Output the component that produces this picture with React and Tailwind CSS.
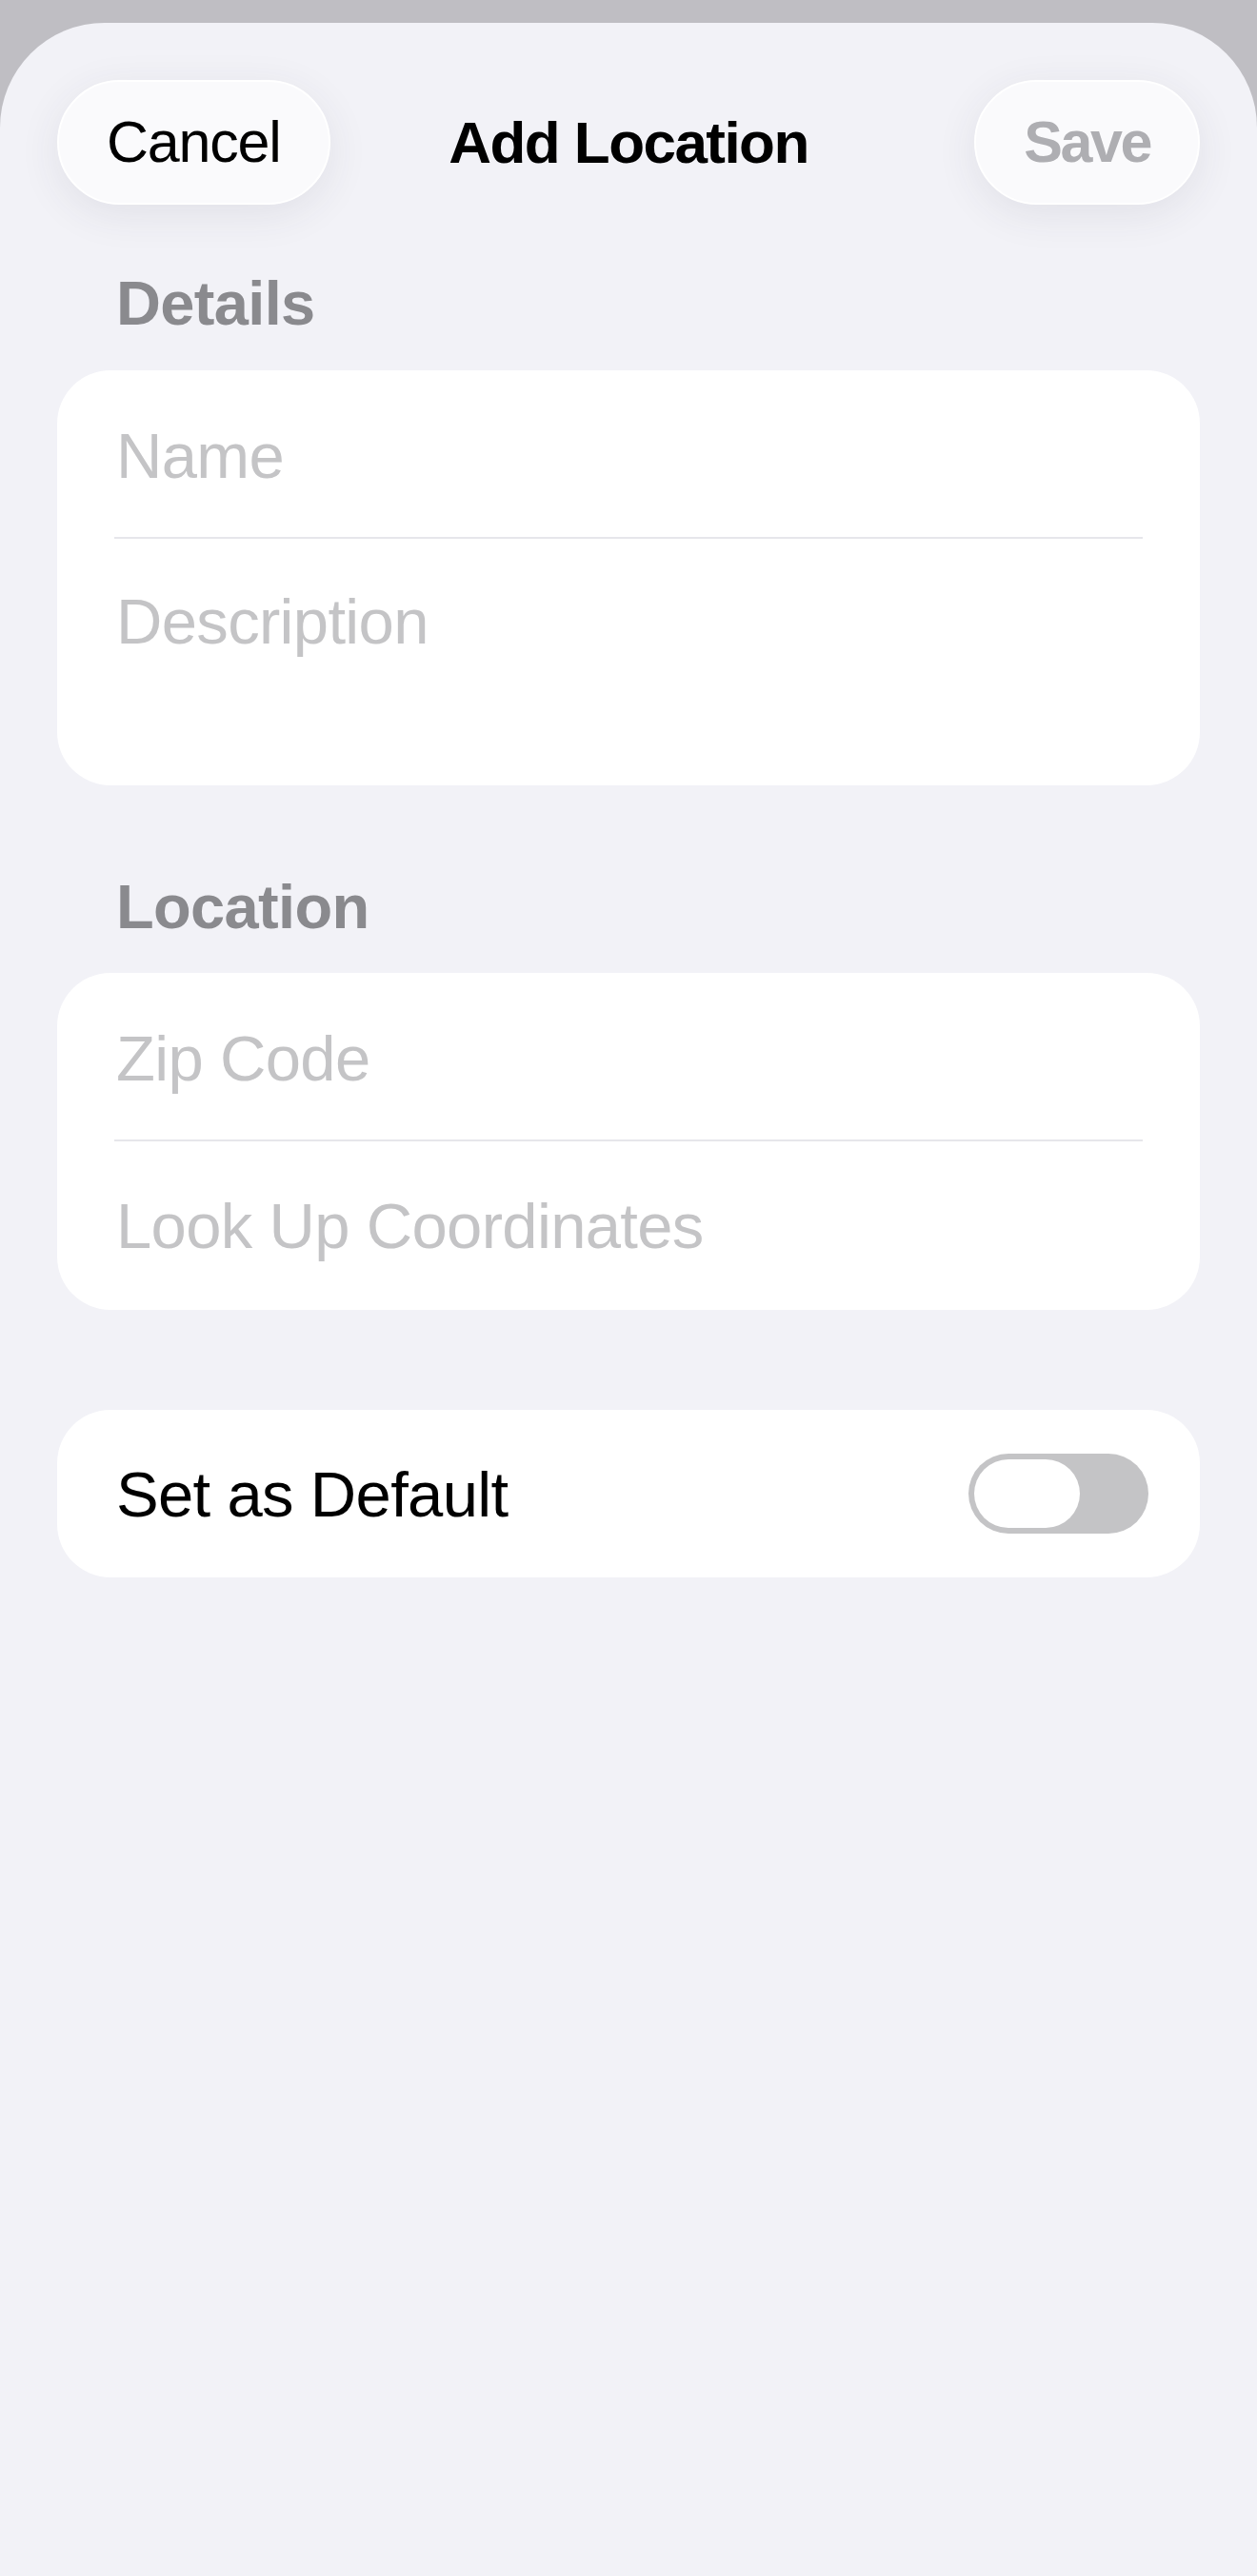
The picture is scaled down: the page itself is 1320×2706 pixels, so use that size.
import { useState } from 'react'

const font = { fontFamily: '"Liberation Sans", Arial, sans-serif' }

function PillButton({ children, className = '' }) {
  return (
    <button
      type="button"
      className={`h-[131px] px-[50px] rounded-full bg-[#fafafc] border-2 border-white shadow-[0_10px_44px_rgba(60,60,80,0.09)] text-[61px] leading-none ${className}`}
    >
      {children}
    </button>
  )
}

function SectionTitle({ children, className = '' }) {
  return (
    <h2 className={`pl-[62px] text-[65px] leading-[80px] font-bold text-[#8a8a8e] tracking-[-0.01em] ${className}`}>
      {children}
    </h2>
  )
}

function FieldRow({ placeholder, tall }) {
  return (
    <div className={`${tall ? 'h-[259px] pt-[47px]' : 'h-[175px] pt-[50px]'}`}>
      <p className="pl-[2px] text-[67px] leading-[80px] text-[#c4c4c6] tracking-[-0.01em]">{placeholder}</p>
    </div>
  )
}

function Divider() {
  return <div className="h-[2px] bg-[#e6e6eb]" />
}

function Toggle({ on, onChange }) {
  return (
    <button
      type="button"
      onClick={() => onChange(!on)}
      className={`w-[189px] h-[84px] rounded-full p-[6px] flex ${on ? 'bg-[#34c759] justify-end' : 'bg-[#c4c4c6] justify-start'}`}
    >
      <span className="w-[111px] h-[72px] rounded-full bg-white" />
    </button>
  )
}

export default function App() {
  const [isDefault, setIsDefault] = useState(false)

  return (
    <div style={font} className="min-h-[2706px] w-[1320px] bg-[#bfbec3] pt-[24px] flex flex-col">
      <div className="flex-1 bg-[#f2f2f7] rounded-t-[110px] px-[60px]">
        <header className="pt-[60px] grid grid-cols-[1fr_auto_1fr] items-center">
          <div className="flex justify-start">
            <PillButton className="text-black tracking-[-0.02em]">Cancel</PillButton>
          </div>
          <h1 className="text-[62px] leading-none font-bold text-black tracking-[-0.025em]">Add Location</h1>
          <div className="flex justify-end">
            <PillButton className="text-[#aeaeb2] font-bold tracking-[-0.04em]">Save</PillButton>
          </div>
        </header>

        <SectionTitle className="mt-[64px]">Details</SectionTitle>
        <section className="mt-[30px] bg-white rounded-[56px] px-[60px]">
          <FieldRow placeholder="Name" />
          <Divider />
          <FieldRow placeholder="Description" tall />
        </section>

        <SectionTitle className="mt-[88px]">Location</SectionTitle>
        <section className="mt-[29px] bg-white rounded-[56px] px-[60px]">
          <FieldRow placeholder="Zip Code" />
          <Divider />
          <div className="h-[177px] pt-[49px]">
            <p className="pl-[2px] text-[67px] leading-[80px] text-[#c4c4c6] tracking-[-0.01em]">Look Up Coordinates</p>
          </div>
        </section>

        <section className="mt-[105px] h-[176px] bg-white rounded-[56px] pl-[60px] pr-[54px] flex items-center justify-between">
          <span className="pl-[2px] pt-[2px] text-[67px] leading-[80px] text-black tracking-[-0.01em]">Set as Default</span>
          <Toggle on={isDefault} onChange={setIsDefault} />
        </section>
      </div>
    </div>
  )
}
